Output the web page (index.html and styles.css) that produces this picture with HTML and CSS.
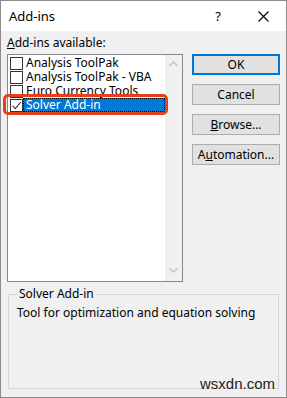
FILE: index.html
```html
<!DOCTYPE html>
<html lang="en">
<head>
    <meta charset="UTF-8">
    <title>Add-ins</title>
    <link rel="stylesheet" href="styles.css">
</head>
<body>
    <div class="window">
        <div class="titlebar">
            <span class="title">Add-ins</span>
            <span class="help">?</span>
            <svg class="close" width="11" height="11" viewBox="0 0 11 11">
                <path d="M0.5 0.5 L10.5 10.5 M10.5 0.5 L0.5 10.5" stroke="#000" stroke-width="1.1" fill="none"/>
            </svg>
        </div>

        <div class="content">
            <div class="label"><u>A</u>dd-ins available:</div>
            <div class="main">
                <div class="listbox">
                    <div class="items">
                        <div class="item"><span class="check"></span><span class="name">Analysis ToolPak</span></div>
                        <div class="item"><span class="check"></span><span class="name">Analysis ToolPak - VBA</span></div>
                        <div class="item"><span class="check"></span><span class="name">Euro Currency Tools</span></div>
                        <div class="item selected">
                            <span class="check">
                                <svg width="11" height="11" viewBox="0 0 11 11"><path d="M1.5 5.5 L4.3 8.6 L9.8 2" stroke="#333" stroke-width="1.1" fill="none"/></svg>
                            </span>
                            <span class="name">Solver Add-in</span>
                        </div>
                    </div>
                    <div class="scrollbar">
                        <svg width="9" height="6" viewBox="0 0 9 6"><path d="M0.5 5 L4.5 1 L8.5 5" stroke="#c2c2c2" stroke-width="1.3" fill="none"/></svg>
                        <svg width="9" height="6" viewBox="0 0 9 6"><path d="M0.5 1 L4.5 5 L8.5 1" stroke="#c2c2c2" stroke-width="1.3" fill="none"/></svg>
                    </div>
                    <div class="marker"></div>
                </div>
                <div class="buttons">
                    <button class="btn default">OK</button>
                    <button class="btn">Cancel</button>
                    <button class="btn"><u>B</u>rowse...</button>
                    <button class="btn">A<u>u</u>tomation...</button>
                </div>
            </div>

            <fieldset class="group">
                <legend>Solver Add-in</legend>
                <p>Tool for optimization and equation solving</p>
            </fieldset>
        </div>
        <div class="watermark">wsxdn.com</div>
    </div>
</body>
</html>
```

FILE: styles.css
```css
* {
    margin: 0;
    padding: 0;
    box-sizing: border-box;
    font-family: "Noto Sans", "Open Sans", sans-serif;
}
body {
    background: #f0f0f0;
}
.window {
    position: relative;
    width: 287px;
    height: 398px;
    border: 1px solid #8c8c8c;
    background: #f0f0f0;
    color: #000;
    font-size: 12px;
}
.titlebar {
    height: 30px;
    background: #fff;
    display: flex;
    align-items: center;
    padding-left: 8px;
}
.title {
    flex: 1;
    font-size: 13px;
}
.help {
    font-size: 13px;
    margin-right: 37px;
}
.close {
    margin-right: 17px;
}
.content {
    padding: 3px 6px 0 6px;
}
.label {
    height: 20px;
    line-height: 17px;
}
.label u {
    text-decoration-thickness: 1px;
}
.main {
    display: flex;
    gap: 9px;
}
.listbox {
    position: relative;
    width: 176px;
    height: 228px;
    border: 1px solid #828790;
    background: #fff;
    display: flex;
}
.items {
    flex: 1;
    padding-top: 1px;
}
.item {
    height: 14px;
    display: flex;
    align-items: center;
    padding-left: 2px;
}
.check {
    width: 13px;
    height: 13px;
    border: 1px solid #333;
    background: #fff;
    display: flex;
    align-items: center;
    justify-content: center;
    flex-shrink: 0;
}
.name {
    flex: 1;
    height: 14px;
    line-height: 14px;
    padding-left: 3px;
    white-space: nowrap;
}
.selected .name {
    background: #0078d7;
    color: #fff;
    outline: 1px dotted #000;
    outline-offset: -1px;
}
.scrollbar {
    width: 17px;
    background: #f0f0f0;
    display: flex;
    flex-direction: column;
    justify-content: space-between;
    align-items: center;
    padding: 6px 0 8px;
}
.marker {
    position: absolute;
    left: -5px;
    top: 39px;
    width: 165px;
    height: 21px;
    border: 3px solid #e5401c;
    border-radius: 5px;
}
.buttons {
    display: flex;
    flex-direction: column;
    gap: 9px;
}
.btn {
    width: 88px;
    height: 21px;
    border: 1px solid #adadad;
    background: #e1e1e1;
    font-size: 12px;
    color: #000;
}
.btn.default {
    border: 2px solid #0078d7;
}
.group {
    margin-top: 5px;
    margin-left: 1px;
    width: 271px;
    height: 102px;
    border: 1px solid #d5d5d5;
    padding: 0 8px;
}
.group legend {
    padding: 0 2px;
    margin-left: 0;
    line-height: 14px;
}
.group p {
    padding-top: 3px;
}
.watermark {
    position: absolute;
    right: 11px;
    bottom: 5px;
    font-family: "Liberation Sans", sans-serif;
    font-size: 15px;
    color: #222;
}
```
